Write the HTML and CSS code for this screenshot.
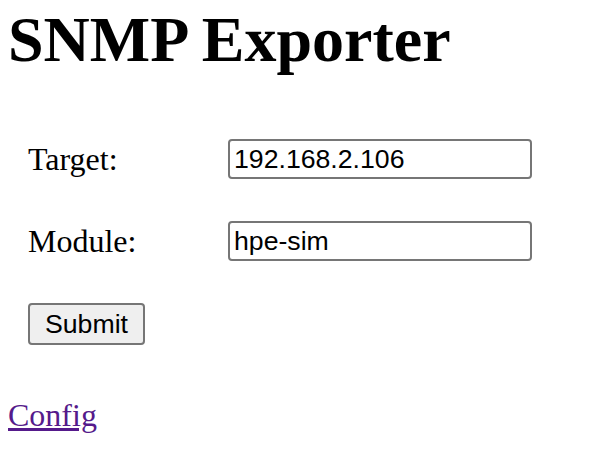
FILE: index.html
```html
<!DOCTYPE html>
<html>
<head>
<meta charset="utf-8">
<title>SNMP Exporter</title>
<link rel="stylesheet" href="styles.css">
</head>
<body>
<h1 class="title">SNMP Exporter</h1>
<form class="form" action="snmp">
  <label class="label" for="target">Target:</label>
  <input class="field" id="target" type="text" name="target" value="192.168.2.106">
  <label class="label" for="module">Module:</label>
  <input class="field" id="module" type="text" name="module" value="hpe-sim">
  <button class="submit" type="submit">Submit</button>
</form>
<p class="links"><a class="link" href="config">Config</a></p>
</body>
</html>
```
FILE: styles.css
```css
html, body {
  background: #fff;
}
body {
  margin: 0 8px;
  font-family: "Liberation Serif", "Times New Roman", serif;
  font-size: 32px;
  color: #000;
}
.title {
  margin: 3px 0 62px;
  font-size: 64px;
  font-weight: bold;
  line-height: normal;
}
.form {
  display: grid;
  grid-template-columns: 200px 304px;
  row-gap: 42px;
  align-items: center;
  padding-left: 20px;
  margin: 0;
}
.label {
  line-height: normal;
}
.field {
  box-sizing: border-box;
  width: 304px;
  height: 40px;
  margin: 0;
  padding: 2px 4px;
  border: 2px solid #767676;
  border-radius: 4px;
  font-family: "Liberation Sans", Arial, sans-serif;
  font-size: 26.67px;
  color: #000;
  background: #fff;
  outline: none;
}
.submit {
  justify-self: start;
  box-sizing: border-box;
  height: 42px;
  margin: 0;
  padding: 2px 15px;
  border: 2px solid #767676;
  border-radius: 4px;
  background: #efefef;
  font-family: "Liberation Sans", Arial, sans-serif;
  font-size: 26.67px;
  color: #000;
}
.links {
  margin: 52px 0 0;
  line-height: normal;
}
.link {
  color: #551a8b;
}
```
